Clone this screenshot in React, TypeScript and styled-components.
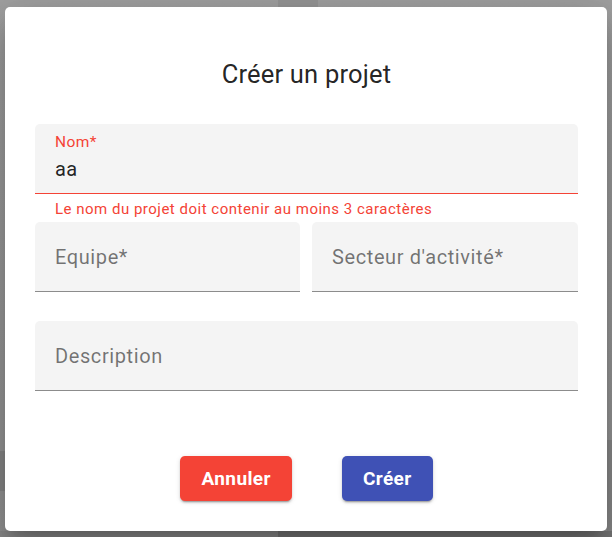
import React from "react";
import styled, { createGlobalStyle } from "styled-components";

const Global = createGlobalStyle`
  html, body { margin: 0; padding: 0; }
  body { font-family: Roboto, "Liberation Sans", Arial, sans-serif; background: #9e9e9e; }
  * { box-sizing: border-box; }
`;

const Backdrop = styled.div`
  position: fixed;
  inset: 0;
  display: flex;
  align-items: center;
  justify-content: center;
  background-color: #a0a0a0;
  background-image:
    linear-gradient(#959595, #959595),
    linear-gradient(#8b8b8b, #8b8b8b),
    linear-gradient(#777777, #777777),
    linear-gradient(#8a8a8a, #8a8a8a),
    linear-gradient(#888888, #888888),
    linear-gradient(180deg, #a0a0a0 0%, #999999 60%, #949494 100%);
  background-size: 40px 7px, 278px 6px, 334px 6px, 5px 91px, 5px 40px, 100% 100%;
  background-position: 278px 0, 0 531px, 278px 531px, 607px 440px, 0 451px, 0 0;
  background-repeat: no-repeat;
`;

const Paper = styled.div`
  width: 602px;
  background: #ffffff;
  border-radius: 5px;
  box-shadow: 0 11px 15px -7px rgba(0,0,0,0.2), 0 24px 38px 3px rgba(0,0,0,0.14), 0 9px 46px 8px rgba(0,0,0,0.12);
  display: flex;
  flex-direction: column;
  padding: 48px 29px 30px 30px;
`;

const Title = styled.h2`
  margin: 0;
  font-size: 25.5px;
  line-height: 38px;
  font-weight: 400;
  color: rgba(0,0,0,0.87);
  text-align: center;
  letter-spacing: 0.2px;
`;

const Form = styled.div`
  margin-top: 31px;
  display: flex;
  flex-direction: column;
`;

const Row = styled.div`
  display: grid;
  grid-template-columns: 265px 266px;
  column-gap: 12px;
`;

const FieldBox = styled.div<{ $filled: boolean; $error: boolean }>`
  height: 70px;
  background: #f4f4f4;
  border-radius: 5px 5px 0 0;
  border-bottom: 1px solid ${(p) => (p.$error ? "#f44336" : "#8c8c8c")};
  padding: ${(p) => (p.$filled ? "10px" : "23px")} 20px 0 20px;
  display: flex;
  flex-direction: column;
  gap: 6px;
`;

const Label = styled.span<{ $shrink: boolean; $error: boolean }>`
  font-size: ${(p) => (p.$shrink ? "15.5px" : "20px")};
  line-height: ${(p) => (p.$shrink ? "17px" : "24px")};
  color: ${(p) => (p.$error ? "#f44336" : "rgba(0,0,0,0.54)")};
  letter-spacing: ${(p) => (p.$shrink ? "0.4px" : "0.6px")};
`;

const Value = styled.span`
  font-size: 20px;
  line-height: 24px;
  color: rgba(0,0,0,0.87);
  letter-spacing: 0.3px;
`;

const Helper = styled.div`
  margin: 7px 0 4px 20px;
  font-size: 15px;
  line-height: 17px;
  color: #f44336;
  letter-spacing: 0.5px;
`;

const Spacer = styled.div`
  height: 29px;
`;

const Actions = styled.div`
  margin-top: 65px;
  display: flex;
  justify-content: center;
  gap: 50px;
`;

const Button = styled.button<{ $bg: string }>`
  height: 45px;
  padding: 0 21px;
  border: none;
  border-radius: 5px;
  background: ${(p) => p.$bg};
  color: #ffffff;
  font-family: Roboto, "Liberation Sans", Arial, sans-serif;
  font-size: 19px;
  font-weight: 700;
  letter-spacing: 0.4px;
  box-shadow: 0 3px 1px -2px rgba(0,0,0,0.2), 0 2px 2px 0 rgba(0,0,0,0.14), 0 1px 5px 0 rgba(0,0,0,0.12);
  cursor: pointer;
`;

type FieldProps = { label: string; value?: string; error?: boolean };

function Field({ label, value, error = false }: FieldProps) {
  const filled = !!value;
  return (
    <FieldBox $filled={filled} $error={error}>
      <Label $shrink={filled} $error={error}>{label}</Label>
      {filled && <Value>{value}</Value>}
    </FieldBox>
  );
}

export default function App() {
  return (
    <>
      <Global />
      <Backdrop>
        <Paper>
          <Title>Créer un projet</Title>
          <Form>
            <Field label="Nom*" value="aa" error />
            <Helper>Le nom du projet doit contenir au moins 3 caractères</Helper>
            <Row>
              <Field label="Equipe*" />
              <Field label="Secteur d'activité*" />
            </Row>
            <Spacer />
            <Field label="Description" />
          </Form>
          <Actions>
            <Button $bg="#f44336">Annuler</Button>
            <Button $bg="#3f51b5">Créer</Button>
          </Actions>
        </Paper>
      </Backdrop>
    </>
  );
}
